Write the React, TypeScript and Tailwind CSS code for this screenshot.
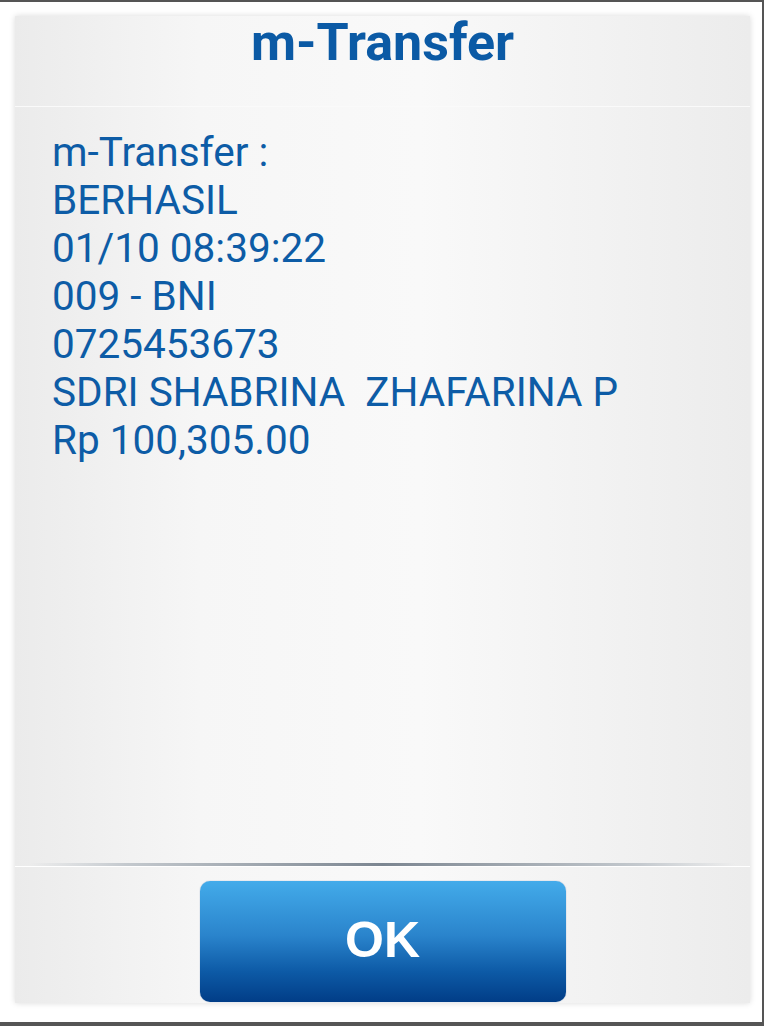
import React from "react";

const lines = [
  "m-Transfer :",
  "BERHASIL",
  "01/10 08:39:22",
  "009 - BNI",
  "0725453673",
  "SDRI SHABRINA  ZHAFARINA P",
  "Rp 100,305.00",
];

export default function App() {
  return (
    <div className="w-[764px] h-[1026px] bg-white border-t-2 border-r-2 border-b-4 border-[#555555] overflow-hidden">
      {/* Dialog panel */}
      <div className="ml-[15px] mt-[14px] w-[735px] h-[987px] flex flex-col shadow-[0_0_6px_rgba(0,0,0,0.15)] bg-[linear-gradient(to_right,#ebebeb,#f6f6f6_25%,#f9f9f9_55%,#ececec)]">
        {/* Title */}
        <div className="h-[91px] flex justify-center border-b border-[#fafafa]">
          <h1 className="font-['Roboto',sans-serif] font-bold text-[52px] leading-[56px] text-[#0b5aa5] -mt-[1px]">
            m-Transfer
          </h1>
        </div>

        {/* Message body */}
        <div className="flex-1 pl-[37px] pt-[21px] font-['Roboto',sans-serif] text-[40.5px] leading-[48px] text-[#0d5ca6]">
          {lines.map((l) => (
            <div key={l} className="whitespace-pre">
              {l}
            </div>
          ))}
        </div>

        {/* Divider */}
        <div className="h-[3px] bg-[linear-gradient(to_right,transparent_2%,#c4c9ce_15%,#7c8691_50%,#c4c9ce_85%,transparent_98%)]" />
        <div className="h-[1px] bg-white" />

        {/* Footer */}
        <div className="h-[136px] flex justify-center pt-[14px]">
          <button className="w-[366px] h-[121px] rounded-[10px] bg-[linear-gradient(to_bottom,#43abea,#2a84cc_45%,#0d5aa6_75%,#013d87)] flex items-center justify-center pb-[4px] shadow-[0_0_1px_rgba(0,60,140,0.6)]">
            <span className="font-['Liberation_Sans',Arial,sans-serif] font-bold text-[50px] leading-none text-white">
              OK
            </span>
          </button>
        </div>
      </div>
    </div>
  );
}
